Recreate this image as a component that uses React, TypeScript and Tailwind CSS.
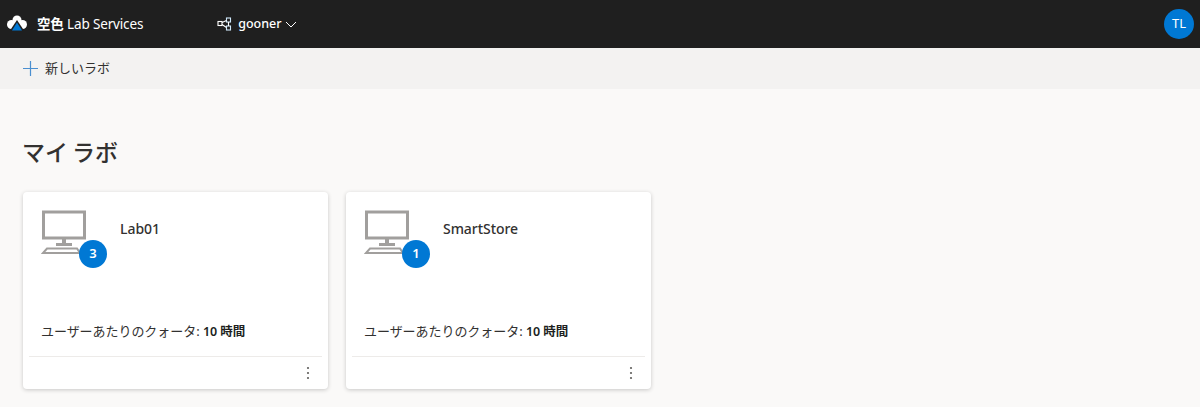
const font = { fontFamily: '"Noto Sans", "Noto Sans CJK JP", sans-serif' };

function Monitor() {
  return (
    <svg width="46" height="46" viewBox="0 0 46 46" fill="none" className="block">
      <rect x="2.5" y="2" width="41" height="26" stroke="#a19f9d" strokeWidth="3" />
      <rect x="21" y="29" width="4" height="5" fill="#a19f9d" />
      <rect x="15" y="33" width="16" height="3" fill="#a19f9d" />
      <path d="M6 38.5H36L39 43H2Z" stroke="#a19f9d" strokeWidth="2" />
    </svg>
  );
}

function Card({ name, count }: { name: string; count: number }) {
  return (
    <div className="w-[305px] h-[197px] bg-white rounded-sm shadow-[0_1px_4px_rgba(0,0,0,0.2)] flex flex-col">
      <div className="flex-1 flex flex-col pl-[18px]">
        <div className="flex pt-[18px]">
          <div className="relative w-[46px] h-[46px]">
            <Monitor />
            <span className="absolute left-[38px] top-[30px] w-[28px] h-[28px] rounded-full bg-[#0078d4] text-white text-[13px] font-semibold flex items-center justify-center">
              {count}
            </span>
          </div>
          <span className="ml-[33px] mt-[9px] text-[14px] leading-[20px] text-[#323130] font-medium tracking-[-0.05px]">{name}</span>
        </div>
        <div className="mt-auto pb-[14px] text-[13px] leading-[20px] text-[#323130] tracking-[-0.05px]">
          ユーザーあたりのクォータ: <span className="font-semibold text-[12.5px] text-[#201f1e]">10 時間</span>
        </div>
      </div>
      <div className="mx-[6px] h-[33px] border-t border-[#edebe9] flex justify-end items-center pr-[12px]">
        <svg width="4" height="14" viewBox="0 0 4 14" fill="#605e5c">
          <circle cx="2" cy="2" r="1.1" />
          <circle cx="2" cy="7" r="1.1" />
          <circle cx="2" cy="12" r="1.1" />
        </svg>
      </div>
    </div>
  );
}

export default function App() {
  return (
    <div className="w-[1200px] h-[407px] overflow-hidden bg-[#faf9f8] flex flex-col" style={font}>
      <header className="h-[48px] bg-[#1f1f1f] flex items-center text-white shrink-0">
        <svg width="22" height="18" viewBox="0 0 22 18" className="ml-[6px]">
          <circle cx="5.5" cy="9.5" r="4.5" fill="#fff" />
          <circle cx="11" cy="5" r="4.5" fill="#fff" />
          <circle cx="16.5" cy="9.5" r="4.5" fill="#fff" />
          <path d="M11 5L18 15.5H4Z" fill="#1f1f1f" />
          <path d="M11 7.5L16 15.5H6Z" fill="#0078d4" />
        </svg>
        <span className="ml-[9px] text-[13.5px] leading-[20px] tracking-[-0.15px]">
          <span className="font-bold">空色</span> Lab Services
        </span>
        <svg width="16" height="14" viewBox="0 0 16 14" fill="none" stroke="#fff" strokeWidth="1.1" className="ml-[74px]">
          <rect x="1" y="4.5" width="4" height="4" />
          <rect x="9.5" y="1" width="4" height="4" stroke="#cfe8fa" />
          <rect x="9.5" y="9" width="4" height="4" stroke="#cfe8fa" />
          <path d="M5 5.5L9.5 3.5M5 7.5L9.5 10.5M11.5 5V9" />
        </svg>
        <span className="ml-[5px] text-[12.5px] font-medium leading-[20px]">gooner</span>
        <svg width="12" height="7" viewBox="0 0 12 7" fill="none" stroke="#fff" strokeWidth="1" className="ml-[3px]">
          <path d="M1 1L6 6L11 1" />
        </svg>
        <div className="ml-auto mr-[6px] w-[30px] h-[30px] rounded-full bg-[#0078d4] flex items-center justify-center text-[13px]">
          TL
        </div>
      </header>
      <div className="h-[41px] bg-[#f3f2f1] flex items-center pl-[23px] pb-[1px] shrink-0">
        <svg width="15" height="15" viewBox="0 0 15 15" stroke="#4a8fd0" strokeWidth="1.2">
          <path d="M7.5 0V15M0 7.5H15" />
        </svg>
        <span className="ml-[7px] text-[13px] leading-[20px] text-[#323130]">新しいラボ</span>
      </div>
      <main className="pl-[23px]">
        <h1 className="mt-[47px] -ml-[1px] text-[23px] leading-[32px] font-medium text-[#323130] [word-spacing:-2px]">マイ ラボ</h1>
        <div className="mt-[24px] flex gap-[18px]">
          <Card name="Lab01" count={3} />
          <Card name="SmartStore" count={1} />
        </div>
      </main>
    </div>
  );
}
